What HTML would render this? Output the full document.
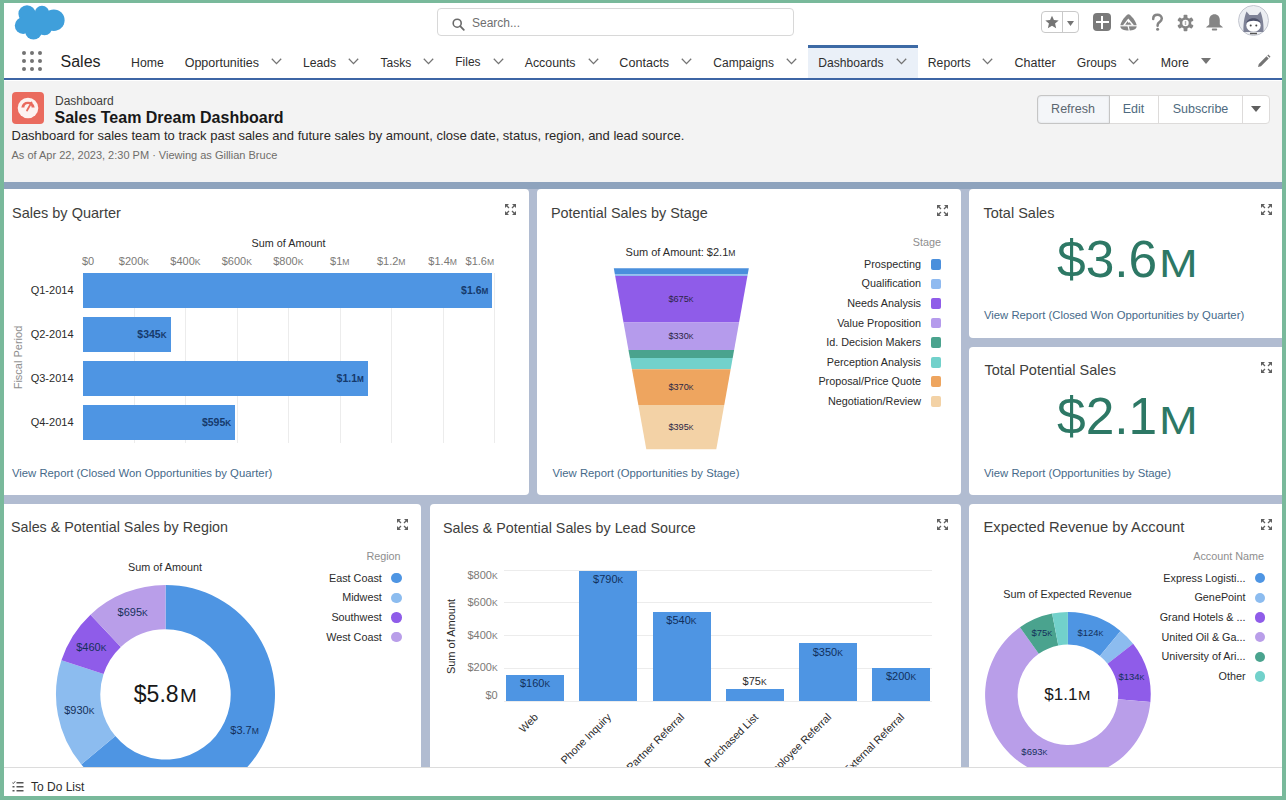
<!DOCTYPE html>
<html><head><meta charset="utf-8">
<style>
*{margin:0;padding:0;box-sizing:border-box}
html,body{width:1286px;height:800px;overflow:hidden;background:#fff}
body{font-family:"Liberation Sans",sans-serif;position:relative}
.a{position:absolute;white-space:nowrap}
.card{position:absolute;background:#fff;border-radius:4px}
.sc{font-size:78%}
.bigM{font-size:38.7px;display:inline-block;transform:scaleX(1.2);transform-origin:0 0;margin-left:2px}
.midM{font-size:0.76em;display:inline-block;transform:scaleX(1.15);transform-origin:0 0;margin-left:1px;margin-right:2px}
</style></head><body>
<div class="a" style="left:0px;top:0px;width:1286px;height:80px;background:#fff;"></div>
<svg class="a" style="left:0px;top:0px" width="70" height="45" viewBox="0 0 70 45"><g fill="#3f9fdb">
<circle cx="27" cy="13.8" r="8.6"/><circle cx="42" cy="13.2" r="7.4"/><circle cx="53.8" cy="20.2" r="10.8"/>
<circle cx="23.2" cy="25.6" r="8.4"/><circle cx="33.5" cy="31.4" r="8.2"/><circle cx="44.5" cy="27.5" r="7.8"/>
<rect x="23" y="15" width="31" height="15"/></g></svg>
<div class="a" style="left:437px;top:8px;width:357px;height:28px;background:#fff;border:1px solid #d8d8d8;border-radius:4px;box-sizing:border-box"></div>
<svg class="a" style="left:452px;top:17.5px" width="13" height="13" viewBox="0 0 13 13"><circle cx="5.2" cy="5.2" r="4" fill="none" stroke="#6a6a6a" stroke-width="1.6"/><line x1="8.2" y1="8.2" x2="11.8" y2="11.8" stroke="#6a6a6a" stroke-width="1.8" stroke-linecap="round"/></svg>
<div class="a" style="left:472.00px;top:17.34px;font-size:12px;line-height:12px;color:#6f6f6f;font-weight:normal;">Search...</div>
<div class="a" style="left:1041px;top:11px;width:38px;height:22px;background:#fff;border:1px solid #c9c9c9;border-radius:4px;box-sizing:border-box"></div>
<div class="a" style="left:1062px;top:11px;width:1px;height:22px;background:#c9c9c9;"></div>
<svg class="a" style="left:1044px;top:14px" width="16" height="16" viewBox="0 0 24 24"><path d="M12 2.5l2.9 6.6 7.1.6-5.4 4.7 1.6 7-6.2-3.7-6.2 3.7 1.6-7L2 9.7l7.1-.6z" fill="#747474"/></svg>
<svg class="a" style="left:1067px;top:21px" width="7" height="5"><path d="M0 0H7L3.5 5Z" fill="#747474"/></svg>
<div class="a" style="left:1093px;top:13px;width:18px;height:18px;background:#7a7a7a;border-radius:4px"></div>
<div class="a" style="left:1095.5px;top:21px;width:13px;height:2px;background:#fff;"></div>
<div class="a" style="left:1101px;top:15.5px;width:2px;height:13px;background:#fff;"></div>
<svg class="a" style="left:1120px;top:14px" width="17" height="17" viewBox="0 0 17 17"><path d="M8.5 0.3 C10.5 0.3 16.7 8 16.7 12 C16.7 15.3 13 16.6 8.5 16.6 C4 16.6 0.3 15.3 0.3 12 C0.3 8 6.5 0.3 8.5 0.3Z" fill="#858585"/><path d="M8.3 4.6 L14.2 11.4 L2.8 11.4Z" fill="#fff"/><path d="M5.2 10.8 L7.6 7.3 L8.6 9 L9.6 8.2 L11.6 10.8Z" fill="#858585"/><path d="M0 11.8 H17" stroke="#fff" stroke-width="1.1"/><path d="M8 11.5 L9.3 17" stroke="#fff" stroke-width="1.1"/></svg>
<svg class="a" style="left:1150px;top:13px" width="15" height="19" viewBox="0 0 15 19"><path d="M3.2 6 C3.2 3.2 5 1.8 7.5 1.8 C10 1.8 11.8 3.4 11.8 5.6 C11.8 8 9.6 8.7 8.4 10.1 C7.8 10.8 7.6 11.6 7.6 12.8" fill="none" stroke="#858585" stroke-width="2.5" stroke-linecap="round"/><circle cx="7.6" cy="16.3" r="1.5" fill="#858585"/></svg>
<svg class="a" style="left:1177px;top:14px" width="17" height="18" viewBox="0 0 17 18"><g fill="#858585" transform="translate(8.5 9)"><circle r="5.8"/><rect x="-1.9" y="-8.3" width="3.8" height="4" rx="0.8" transform="rotate(0)"/><rect x="-1.9" y="-8.3" width="3.8" height="4" rx="0.8" transform="rotate(60)"/><rect x="-1.9" y="-8.3" width="3.8" height="4" rx="0.8" transform="rotate(120)"/><rect x="-1.9" y="-8.3" width="3.8" height="4" rx="0.8" transform="rotate(180)"/><rect x="-1.9" y="-8.3" width="3.8" height="4" rx="0.8" transform="rotate(240)"/><rect x="-1.9" y="-8.3" width="3.8" height="4" rx="0.8" transform="rotate(300)"/></g><circle cx="8.5" cy="9" r="3.2" fill="#fff"/><path d="M8.5 7 V11 M7.5 8 H9.5 M7.5 10 H9.5" stroke="#999" stroke-width="0.6"/></svg>
<svg class="a" style="left:1205px;top:13px" width="19" height="19" viewBox="0 0 19 19"><path d="M1 14.5 C1.5 13.2 3.5 12.6 4.2 11.5 L4.2 7 C4.2 3.6 6.4 1.2 9.5 1.2 C12.6 1.2 14.8 3.6 14.8 7 L14.8 11.5 C15.5 12.6 17.5 13.2 18 14.5 Z" fill="#858585"/><rect x="6.8" y="15.6" width="5.4" height="1.8" rx="0.9" fill="#858585"/></svg>
<svg class="a" style="left:1238px;top:5px" width="31" height="31" viewBox="0 0 31 31">
<circle cx="15.5" cy="15.5" r="15" fill="#eceef2" stroke="#c3c6cf" stroke-width="1"/>
<path d="M5.5 27 C5 16 7.5 9 8.5 6.5 L11.5 10 L19.5 10 L22.5 6.5 C23.5 9 26 16 25.5 27 Z" fill="#7e8296"/>
<ellipse cx="15.5" cy="20.5" rx="7.2" ry="6.3" fill="#fff"/>
<path d="M8.3 18 C9.5 11.5 21.5 11.5 22.7 18 C19 15 12 15 8.3 18Z" fill="#4d5169"/>
<circle cx="12.7" cy="20.5" r="1" fill="#444"/><circle cx="18.3" cy="20.5" r="1" fill="#444"/>
<path d="M12 28.5 H19" stroke="#555" stroke-width="1.5"/>
</svg>
<svg class="a" style="left:22px;top:51px" width="20" height="20" viewBox="0 0 20 20" fill="#737373"><circle cx="2" cy="2" r="2"/><circle cx="2" cy="10" r="2"/><circle cx="2" cy="18" r="2"/><circle cx="10" cy="2" r="2"/><circle cx="10" cy="10" r="2"/><circle cx="10" cy="18" r="2"/><circle cx="18" cy="2" r="2"/><circle cx="18" cy="10" r="2"/><circle cx="18" cy="18" r="2"/></svg>
<div class="a" style="left:60.50px;top:53.96px;font-size:16px;line-height:16px;color:#232323;font-weight:normal;">Sales</div>
<div class="a" style="left:808px;top:44.5px;width:110px;height:33px;background:#eaf0f8;border-top:3px solid #3d6aa5;box-sizing:border-box"></div>
<div class="a" style="left:131.10px;top:57.01px;font-size:12.27px;line-height:12.27px;color:#2e2e2e;font-weight:normal;">Home</div>
<div class="a" style="left:184.70px;top:56.82px;font-size:12.5px;line-height:12.5px;color:#2e2e2e;font-weight:normal;">Opportunities</div>
<svg class="a" style="left:270.6px;top:58px" width="11" height="7" viewBox="0 0 11 7"><path d="M0.8 0.8 L5.5 5.6 L10.2 0.8" fill="none" stroke="#747474" stroke-width="1.3"/></svg>
<div class="a" style="left:302.90px;top:57.05px;font-size:12.23px;line-height:12.23px;color:#2e2e2e;font-weight:normal;">Leads</div>
<svg class="a" style="left:348.0px;top:58px" width="11" height="7" viewBox="0 0 11 7"><path d="M0.8 0.8 L5.5 5.6 L10.2 0.8" fill="none" stroke="#747474" stroke-width="1.3"/></svg>
<div class="a" style="left:380.50px;top:57.24px;font-size:12.0px;line-height:12.0px;color:#2e2e2e;font-weight:normal;">Tasks</div>
<svg class="a" style="left:423.4px;top:58px" width="11" height="7" viewBox="0 0 11 7"><path d="M0.8 0.8 L5.5 5.6 L10.2 0.8" fill="none" stroke="#747474" stroke-width="1.3"/></svg>
<div class="a" style="left:455.30px;top:57.28px;font-size:11.95px;line-height:11.95px;color:#2e2e2e;font-weight:normal;">Files</div>
<svg class="a" style="left:492.8px;top:58px" width="11" height="7" viewBox="0 0 11 7"><path d="M0.8 0.8 L5.5 5.6 L10.2 0.8" fill="none" stroke="#747474" stroke-width="1.3"/></svg>
<div class="a" style="left:524.70px;top:56.94px;font-size:12.36px;line-height:12.36px;color:#2e2e2e;font-weight:normal;">Accounts</div>
<svg class="a" style="left:588.0px;top:58px" width="11" height="7" viewBox="0 0 11 7"><path d="M0.8 0.8 L5.5 5.6 L10.2 0.8" fill="none" stroke="#747474" stroke-width="1.3"/></svg>
<div class="a" style="left:619.30px;top:56.73px;font-size:12.6px;line-height:12.6px;color:#2e2e2e;font-weight:normal;">Contacts</div>
<svg class="a" style="left:680.8px;top:58px" width="11" height="7" viewBox="0 0 11 7"><path d="M0.8 0.8 L5.5 5.6 L10.2 0.8" fill="none" stroke="#747474" stroke-width="1.3"/></svg>
<div class="a" style="left:713.30px;top:57.24px;font-size:12.0px;line-height:12.0px;color:#2e2e2e;font-weight:normal;">Campaigns</div>
<svg class="a" style="left:785.6px;top:58px" width="11" height="7" viewBox="0 0 11 7"><path d="M0.8 0.8 L5.5 5.6 L10.2 0.8" fill="none" stroke="#747474" stroke-width="1.3"/></svg>
<div class="a" style="left:818.30px;top:57.16px;font-size:12.1px;line-height:12.1px;color:#2e2e2e;font-weight:normal;">Dashboards</div>
<svg class="a" style="left:895.8px;top:58px" width="11" height="7" viewBox="0 0 11 7"><path d="M0.8 0.8 L5.5 5.6 L10.2 0.8" fill="none" stroke="#747474" stroke-width="1.3"/></svg>
<div class="a" style="left:927.80px;top:57.07px;font-size:12.2px;line-height:12.2px;color:#2e2e2e;font-weight:normal;">Reports</div>
<svg class="a" style="left:981.6px;top:58px" width="11" height="7" viewBox="0 0 11 7"><path d="M0.8 0.8 L5.5 5.6 L10.2 0.8" fill="none" stroke="#747474" stroke-width="1.3"/></svg>
<div class="a" style="left:1014.60px;top:56.82px;font-size:12.5px;line-height:12.5px;color:#2e2e2e;font-weight:normal;">Chatter</div>
<div class="a" style="left:1076.80px;top:57.16px;font-size:12.1px;line-height:12.1px;color:#2e2e2e;font-weight:normal;">Groups</div>
<svg class="a" style="left:1128.0px;top:58px" width="11" height="7" viewBox="0 0 11 7"><path d="M0.8 0.8 L5.5 5.6 L10.2 0.8" fill="none" stroke="#747474" stroke-width="1.3"/></svg>
<div class="a" style="left:1160.80px;top:56.95px;font-size:12.34px;line-height:12.34px;color:#2e2e2e;font-weight:normal;">More</div>
<svg class="a" style="left:1201px;top:58px" width="10" height="6"><path d="M0 0H10L5 6Z" fill="#747474"/></svg>
<svg class="a" style="left:1257px;top:54px" width="14" height="14" viewBox="0 0 14 14"><path d="M1 13 L1.8 10 L9.5 2.3 L11.7 4.5 L4 12.2 Z M10.3 1.5 L11.3 0.5 L13.5 2.7 L12.5 3.7Z" fill="#747474"/></svg>
<div class="a" style="left:0px;top:77.6px;width:1286px;height:2.6px;background:#3d65a5;"></div>
<div class="a" style="left:0px;top:80.5px;width:1286px;height:101px;background:#f3f3f3;"></div>
<div class="a" style="left:12px;top:92px;width:32px;height:32px;background:#ea6b5e;border-radius:4px"></div>
<svg class="a" style="left:12px;top:92px" width="32" height="32" viewBox="0 0 32 32"><circle cx="16" cy="16" r="10.3" fill="#fdf3f1"/><path d="M9.3 15.5 A6.8 6.8 0 0 1 22.7 15.5 L19.6 15.5 A3.6 3.6 0 0 0 12.4 15.5Z" fill="#ea6b5e"/><path d="M15 18.5 L19.5 10.5" stroke="#ea6b5e" stroke-width="1.8" stroke-linecap="round"/></svg>
<div class="a" style="left:55.00px;top:94.64px;font-size:12px;line-height:12px;color:#3e3e3c;font-weight:normal;">Dashboard</div>
<div class="a" style="left:54.50px;top:109.66px;font-size:16px;line-height:16px;color:#181818;font-weight:bold;">Sales Team Dream Dashboard</div>
<div class="a" style="left:11.50px;top:128.70px;font-size:13px;line-height:13px;color:#2b2826;font-weight:normal;">Dashboard for sales team to track past sales and future sales by amount, close date, status, region, and lead source.</div>
<div class="a" style="left:11.50px;top:150.09px;font-size:11px;line-height:11px;color:#6f6d6a;font-weight:normal;">As of Apr 22, 2023, 2:30 PM · Viewing as Gillian Bruce</div>
<div class="a" style="left:1037px;top:95px;width:233px;height:29px;background:#fff;border:1px solid #dddbda;border-radius:4px;box-sizing:border-box"></div>
<div class="a" style="left:1037px;top:95px;width:73px;height:29px;background:#f4f6f9;border:1px solid #c5c5c5;border-radius:4px 0 0 4px;box-sizing:border-box;box-shadow:inset 0 0 2px rgba(0,0,0,.12)"></div>
<div class="a" style="left:1158px;top:95px;width:1px;height:29px;background:#dddbda;"></div>
<div class="a" style="left:1242px;top:95px;width:1px;height:29px;background:#dddbda;"></div>
<div class="a" style="left:573.00px;width:1000px;text-align:center;top:103.42px;font-size:12.5px;line-height:12.5px;color:#5b6670;font-weight:normal;">Refresh</div>
<div class="a" style="left:633.50px;width:1000px;text-align:center;top:103.42px;font-size:12.5px;line-height:12.5px;color:#4e6a80;font-weight:normal;">Edit</div>
<div class="a" style="left:700.50px;width:1000px;text-align:center;top:103.42px;font-size:12.5px;line-height:12.5px;color:#4e6a80;font-weight:normal;">Subscribe</div>
<svg class="a" style="left:1251px;top:106px" width="10" height="6"><path d="M0 0H10L5 6Z" fill="#5f5f5f"/></svg>
<div class="a" style="left:0px;top:181.5px;width:1286px;height:620px;background:#b1bcd1;"></div>
<div class="a" style="left:0px;top:181.5px;width:1286px;height:7.5px;background:#8ea3bd;"></div>
<div class="card" style="left:0px;top:189px;width:529px;height:306px"></div>
<div class="card" style="left:537px;top:189px;width:424px;height:306px"></div>
<div class="card" style="left:969px;top:189px;width:317px;height:149px"></div>
<div class="card" style="left:969px;top:347px;width:317px;height:148px"></div>
<div class="card" style="left:0px;top:504px;width:421px;height:300px"></div>
<div class="card" style="left:430px;top:504px;width:531px;height:300px"></div>
<div class="card" style="left:969px;top:504px;width:317px;height:300px"></div>
<div class="a" style="left:12.00px;top:206.03px;font-size:14.5px;line-height:14.5px;color:#3e3e3c;font-weight:normal;">Sales by Quarter</div>
<svg class="a" style="left:505px;top:204px" width="11" height="11" viewBox="0 0 11 11"><g fill="#5f5f5f"><path d="M0 0H4L0 4Z"/><path d="M11 0V4L7 0Z"/><path d="M0 11V7L4 11Z"/><path d="M11 11H7L11 7Z"/></g><g stroke="#5f5f5f" stroke-width="1.3"><path d="M1 1L4 4M10 1L7 4M1 10L4 7M10 10L7 7"/></g></svg>
<div class="a" style="left:-211.50px;width:1000px;text-align:center;top:238.06px;font-size:10.8px;line-height:10.8px;color:#2b2b2b;font-weight:normal;">Sum of Amount</div>
<div class="a" style="left:134px;top:273px;width:1px;height:170px;background:#ececec;"></div>
<div class="a" style="left:185px;top:273px;width:1px;height:170px;background:#ececec;"></div>
<div class="a" style="left:237px;top:273px;width:1px;height:170px;background:#ececec;"></div>
<div class="a" style="left:288px;top:273px;width:1px;height:170px;background:#ececec;"></div>
<div class="a" style="left:340px;top:273px;width:1px;height:170px;background:#ececec;"></div>
<div class="a" style="left:391px;top:273px;width:1px;height:170px;background:#ececec;"></div>
<div class="a" style="left:443px;top:273px;width:1px;height:170px;background:#ececec;"></div>
<div class="a" style="left:494px;top:273px;width:1px;height:170px;background:#ececec;"></div>
<div class="a" style="left:82.00px;top:256.49px;font-size:11px;line-height:11px;color:#7b7976;font-weight:normal;">$0</div>
<div class="a" style="left:-366.05px;width:1000px;text-align:center;top:256.49px;font-size:11px;line-height:11px;color:#7b7976;font-weight:normal;">$200<span class="sc">K</span></div>
<div class="a" style="left:-314.60px;width:1000px;text-align:center;top:256.49px;font-size:11px;line-height:11px;color:#7b7976;font-weight:normal;">$400<span class="sc">K</span></div>
<div class="a" style="left:-263.15px;width:1000px;text-align:center;top:256.49px;font-size:11px;line-height:11px;color:#7b7976;font-weight:normal;">$600<span class="sc">K</span></div>
<div class="a" style="left:-211.70px;width:1000px;text-align:center;top:256.49px;font-size:11px;line-height:11px;color:#7b7976;font-weight:normal;">$800<span class="sc">K</span></div>
<div class="a" style="left:-160.25px;width:1000px;text-align:center;top:256.49px;font-size:11px;line-height:11px;color:#7b7976;font-weight:normal;">$1<span class="sc">M</span></div>
<div class="a" style="left:-108.80px;width:1000px;text-align:center;top:256.49px;font-size:11px;line-height:11px;color:#7b7976;font-weight:normal;">$1.2<span class="sc">M</span></div>
<div class="a" style="left:-57.35px;width:1000px;text-align:center;top:256.49px;font-size:11px;line-height:11px;color:#7b7976;font-weight:normal;">$1.4<span class="sc">M</span></div>
<div class="a" style="left:-505.90px;width:1000px;text-align:right;top:256.49px;font-size:11px;line-height:11px;color:#7b7976;font-weight:normal;">$1.6<span class="sc">M</span></div>
<div class="a" style="left:82.5px;top:273px;width:409.8px;height:35px;background:#4e95e3;"></div>
<div class="a" style="left:-511.70px;width:1000px;text-align:right;top:285.31px;font-size:10.5px;line-height:10.5px;color:#163a6c;font-weight:bold;">$1.6<span class="sc">M</span></div>
<div class="a" style="left:-926.50px;width:1000px;text-align:right;top:285.19px;font-size:11px;line-height:11px;color:#2b2b2b;font-weight:normal;">Q1-2014</div>
<div class="a" style="left:82.5px;top:317px;width:88.1px;height:35px;background:#4e95e3;"></div>
<div class="a" style="left:-833.40px;width:1000px;text-align:right;top:329.31px;font-size:10.5px;line-height:10.5px;color:#163a6c;font-weight:bold;">$345<span class="sc">K</span></div>
<div class="a" style="left:-926.50px;width:1000px;text-align:right;top:329.19px;font-size:11px;line-height:11px;color:#2b2b2b;font-weight:normal;">Q2-2014</div>
<div class="a" style="left:82.5px;top:361px;width:285.3px;height:35px;background:#4e95e3;"></div>
<div class="a" style="left:-636.20px;width:1000px;text-align:right;top:373.31px;font-size:10.5px;line-height:10.5px;color:#163a6c;font-weight:bold;">$1.1<span class="sc">M</span></div>
<div class="a" style="left:-926.50px;width:1000px;text-align:right;top:373.19px;font-size:11px;line-height:11px;color:#2b2b2b;font-weight:normal;">Q3-2014</div>
<div class="a" style="left:82.5px;top:405px;width:152.7px;height:35px;background:#4e95e3;"></div>
<div class="a" style="left:-768.80px;width:1000px;text-align:right;top:417.31px;font-size:10.5px;line-height:10.5px;color:#163a6c;font-weight:bold;">$595<span class="sc">K</span></div>
<div class="a" style="left:-926.50px;width:1000px;text-align:right;top:417.19px;font-size:11px;line-height:11px;color:#2b2b2b;font-weight:normal;">Q4-2014</div>
<div class="a" style="left:-481.70px;width:1000px;text-align:center;top:352.19px;font-size:11px;line-height:11px;color:#8e8e8e;font-weight:normal;transform:rotate(-90deg);transform-origin:500px 50%;">Fiscal Period</div>
<div class="a" style="left:12.00px;top:467.83px;font-size:11.3px;line-height:11.3px;color:#466a8a;font-weight:normal;">View Report (Closed Won Opportunities by Quarter)</div>
<div class="a" style="left:551.00px;top:205.81px;font-size:14.4px;line-height:14.4px;color:#3e3e3c;font-weight:normal;">Potential Sales by Stage</div>
<svg class="a" style="left:937px;top:204.5px" width="11" height="11" viewBox="0 0 11 11"><g fill="#5f5f5f"><path d="M0 0H4L0 4Z"/><path d="M11 0V4L7 0Z"/><path d="M0 11V7L4 11Z"/><path d="M11 11H7L11 7Z"/></g><g stroke="#5f5f5f" stroke-width="1.3"><path d="M1 1L4 4M10 1L7 4M1 10L4 7M10 10L7 7"/></g></svg>
<div class="a" style="left:180.50px;width:1000px;text-align:center;top:246.79px;font-size:11px;line-height:11px;color:#2b2b2b;font-weight:normal;">Sum of Amount: $2.1<span class="sc">M</span></div>
<svg class="a" style="left:537px;top:189px" width="424" height="306"><path d="M76.80 79.30 L211.80 79.30 L210.69 85.50 L77.91 85.50Z" fill="#4a8fdc"/><path d="M77.91 85.50 L210.69 85.50 L210.42 87.00 L78.18 87.00Z" fill="#8fbaf0"/><path d="M78.18 87.00 L210.42 87.00 L202.07 133.50 L86.53 133.50Z" fill="#8f5ce9"/><path d="M86.53 133.50 L202.07 133.50 L197.13 161.00 L91.47 161.00Z" fill="#b59bec"/><path d="M91.47 161.00 L197.13 161.00 L195.69 169.00 L92.91 169.00Z" fill="#4aa38e"/><path d="M92.91 169.00 L195.69 169.00 L193.66 180.30 L94.94 180.30Z" fill="#72d1cb"/><path d="M94.94 180.30 L193.66 180.30 L187.25 216.00 L101.35 216.00Z" fill="#eea55f"/><path d="M101.35 216.00 L187.25 216.00 L179.30 260.30 L109.30 260.30Z" fill="#f3d2a6"/></svg>
<div class="a" style="left:181.00px;width:1000px;text-align:center;top:295.11px;font-size:9.2px;line-height:9.2px;color:#2c2545;font-weight:normal;">$675<span class="sc">K</span></div>
<div class="a" style="left:181.00px;width:1000px;text-align:center;top:331.61px;font-size:9.2px;line-height:9.2px;color:#2c2545;font-weight:normal;">$330<span class="sc">K</span></div>
<div class="a" style="left:181.00px;width:1000px;text-align:center;top:382.61px;font-size:9.2px;line-height:9.2px;color:#2c2545;font-weight:normal;">$370<span class="sc">K</span></div>
<div class="a" style="left:181.00px;width:1000px;text-align:center;top:422.61px;font-size:9.2px;line-height:9.2px;color:#2c2545;font-weight:normal;">$395<span class="sc">K</span></div>
<div class="a" style="left:-59.00px;width:1000px;text-align:right;top:236.86px;font-size:10.8px;line-height:10.8px;color:#8e8e8e;font-weight:normal;">Stage</div>
<div class="a" style="left:-79.00px;width:1000px;text-align:right;top:258.86px;font-size:10.8px;line-height:10.8px;color:#2b2b2b;font-weight:normal;">Prospecting</div>
<div class="a" style="left:930.8px;top:259.0px;width:10.7px;height:10.7px;background:#4a8fdc;border-radius:2px"></div>
<div class="a" style="left:-79.00px;width:1000px;text-align:right;top:278.43px;font-size:10.8px;line-height:10.8px;color:#2b2b2b;font-weight:normal;">Qualification</div>
<div class="a" style="left:930.8px;top:278.57px;width:10.7px;height:10.7px;background:#8fbaf0;border-radius:2px"></div>
<div class="a" style="left:-79.00px;width:1000px;text-align:right;top:298.00px;font-size:10.8px;line-height:10.8px;color:#2b2b2b;font-weight:normal;">Needs Analysis</div>
<div class="a" style="left:930.8px;top:298.14px;width:10.7px;height:10.7px;background:#8f5ce9;border-radius:2px"></div>
<div class="a" style="left:-79.00px;width:1000px;text-align:right;top:317.57px;font-size:10.8px;line-height:10.8px;color:#2b2b2b;font-weight:normal;">Value Proposition</div>
<div class="a" style="left:930.8px;top:317.71px;width:10.7px;height:10.7px;background:#b59bec;border-radius:2px"></div>
<div class="a" style="left:-79.00px;width:1000px;text-align:right;top:337.14px;font-size:10.8px;line-height:10.8px;color:#2b2b2b;font-weight:normal;">Id. Decision Makers</div>
<div class="a" style="left:930.8px;top:337.28000000000003px;width:10.7px;height:10.7px;background:#4aa38e;border-radius:2px"></div>
<div class="a" style="left:-79.00px;width:1000px;text-align:right;top:356.71px;font-size:10.8px;line-height:10.8px;color:#2b2b2b;font-weight:normal;">Perception Analysis</div>
<div class="a" style="left:930.8px;top:356.84999999999997px;width:10.7px;height:10.7px;background:#72d1cb;border-radius:2px"></div>
<div class="a" style="left:-79.00px;width:1000px;text-align:right;top:376.28px;font-size:10.8px;line-height:10.8px;color:#2b2b2b;font-weight:normal;">Proposal/Price Quote</div>
<div class="a" style="left:930.8px;top:376.42px;width:10.7px;height:10.7px;background:#eea55f;border-radius:2px"></div>
<div class="a" style="left:-79.00px;width:1000px;text-align:right;top:395.85px;font-size:10.8px;line-height:10.8px;color:#2b2b2b;font-weight:normal;">Negotiation/Review</div>
<div class="a" style="left:930.8px;top:395.99px;width:10.7px;height:10.7px;background:#f3d2a6;border-radius:2px"></div>
<div class="a" style="left:552.50px;top:467.73px;font-size:11.3px;line-height:11.3px;color:#466a8a;font-weight:normal;">View Report (Opportunities by Stage)</div>
<div class="a" style="left:983.50px;top:205.63px;font-size:14.5px;line-height:14.5px;color:#3e3e3c;font-weight:normal;">Total Sales</div>
<svg class="a" style="left:1261px;top:204px" width="11" height="11" viewBox="0 0 11 11"><g fill="#5f5f5f"><path d="M0 0H4L0 4Z"/><path d="M11 0V4L7 0Z"/><path d="M0 11V7L4 11Z"/><path d="M11 11H7L11 7Z"/></g><g stroke="#5f5f5f" stroke-width="1.3"><path d="M1 1L4 4M10 1L7 4M1 10L4 7M10 10L7 7"/></g></svg>
<div class="a" style="left:1057.00px;top:233.61px;font-size:51.5px;line-height:51.5px;color:#2d7865;font-weight:normal;">$3.6<span class="bigM">M</span></div>
<div class="a" style="left:984.00px;top:310.03px;font-size:11.3px;line-height:11.3px;color:#466a8a;font-weight:normal;">View Report (Closed Won Opportunities by Quarter)</div>
<div class="a" style="left:984.50px;top:362.73px;font-size:14.5px;line-height:14.5px;color:#3e3e3c;font-weight:normal;">Total Potential Sales</div>
<svg class="a" style="left:1261px;top:362px" width="11" height="11" viewBox="0 0 11 11"><g fill="#5f5f5f"><path d="M0 0H4L0 4Z"/><path d="M11 0V4L7 0Z"/><path d="M0 11V7L4 11Z"/><path d="M11 11H7L11 7Z"/></g><g stroke="#5f5f5f" stroke-width="1.3"><path d="M1 1L4 4M10 1L7 4M1 10L4 7M10 10L7 7"/></g></svg>
<div class="a" style="left:1057.00px;top:391.01px;font-size:51.5px;line-height:51.5px;color:#2d7865;font-weight:normal;">$2.1<span class="bigM">M</span></div>
<div class="a" style="left:984.00px;top:467.73px;font-size:11.3px;line-height:11.3px;color:#466a8a;font-weight:normal;">View Report (Opportunities by Stage)</div>
<div class="a" style="left:11.00px;top:520.30px;font-size:14.3px;line-height:14.3px;color:#3e3e3c;font-weight:normal;">Sales &amp; Potential Sales by Region</div>
<svg class="a" style="left:397px;top:518.5px" width="11" height="11" viewBox="0 0 11 11"><g fill="#5f5f5f"><path d="M0 0H4L0 4Z"/><path d="M11 0V4L7 0Z"/><path d="M0 11V7L4 11Z"/><path d="M11 11H7L11 7Z"/></g><g stroke="#5f5f5f" stroke-width="1.3"><path d="M1 1L4 4M10 1L7 4M1 10L4 7M10 10L7 7"/></g></svg>
<div class="a" style="left:-335.00px;width:1000px;text-align:center;top:562.16px;font-size:10.8px;line-height:10.8px;color:#2b2b2b;font-weight:normal;">Sum of Amount</div>
<svg class="a" style="left:40px;top:570px" width="260" height="250"><path d="M125.50 14.90 A109.5 109.5 0 1 1 41.31 194.42 L75.37 166.09 A65.2 65.2 0 1 0 125.50 59.20Z" fill="#4e95e3"/><path d="M41.31 194.42 A109.5 109.5 0 0 1 21.43 90.34 L63.54 104.12 A65.2 65.2 0 0 0 75.37 166.09Z" fill="#8cbcef"/><path d="M21.43 90.34 A109.5 109.5 0 0 1 50.47 44.64 L80.83 76.91 A65.2 65.2 0 0 0 63.54 104.12Z" fill="#8f5ce9"/><path d="M50.47 44.64 A109.5 109.5 0 0 1 125.50 14.90 L125.50 59.20 A65.2 65.2 0 0 0 80.83 76.91Z" fill="#b99ee9"/></svg>
<div class="a" style="left:-367.30px;width:1000px;text-align:center;top:606.69px;font-size:11px;line-height:11px;color:#14305a;font-weight:normal;">$695<span class="sc">K</span></div>
<div class="a" style="left:-408.70px;width:1000px;text-align:center;top:641.69px;font-size:11px;line-height:11px;color:#14305a;font-weight:normal;">$460<span class="sc">K</span></div>
<div class="a" style="left:-420.70px;width:1000px;text-align:center;top:705.19px;font-size:11px;line-height:11px;color:#14305a;font-weight:normal;">$930<span class="sc">K</span></div>
<div class="a" style="left:-255.40px;width:1000px;text-align:center;top:725.49px;font-size:11px;line-height:11px;color:#14305a;font-weight:normal;">$3.7<span class="sc">M</span></div>
<div class="a" style="left:-335.00px;width:1000px;text-align:center;top:683.23px;font-size:23px;line-height:23px;color:#181818;font-weight:normal;">$5.8<span class="midM">M</span></div>
<div class="a" style="left:-599.40px;width:1000px;text-align:right;top:551.16px;font-size:10.8px;line-height:10.8px;color:#8e8e8e;font-weight:normal;">Region</div>
<div class="a" style="left:-618.20px;width:1000px;text-align:right;top:572.66px;font-size:10.8px;line-height:10.8px;color:#2b2b2b;font-weight:normal;">East Coast</div>
<div class="a" style="left:391.4px;top:573.0px;width:10.4px;height:10.4px;border-radius:50%;background:#4e95e3"></div>
<div class="a" style="left:-618.20px;width:1000px;text-align:right;top:592.31px;font-size:10.8px;line-height:10.8px;color:#2b2b2b;font-weight:normal;">Midwest</div>
<div class="a" style="left:391.4px;top:592.6px;width:10.4px;height:10.4px;border-radius:50%;background:#8cbcef"></div>
<div class="a" style="left:-618.20px;width:1000px;text-align:right;top:611.96px;font-size:10.8px;line-height:10.8px;color:#2b2b2b;font-weight:normal;">Southwest</div>
<div class="a" style="left:391.4px;top:612.3px;width:10.4px;height:10.4px;border-radius:50%;background:#8f5ce9"></div>
<div class="a" style="left:-618.20px;width:1000px;text-align:right;top:631.61px;font-size:10.8px;line-height:10.8px;color:#2b2b2b;font-weight:normal;">West Coast</div>
<div class="a" style="left:391.4px;top:632.0px;width:10.4px;height:10.4px;border-radius:50%;background:#b99ee9"></div>
<div class="a" style="left:443.00px;top:520.70px;font-size:14.3px;line-height:14.3px;color:#3e3e3c;font-weight:normal;">Sales &amp; Potential Sales by Lead Source</div>
<svg class="a" style="left:937px;top:518.5px" width="11" height="11" viewBox="0 0 11 11"><g fill="#5f5f5f"><path d="M0 0H4L0 4Z"/><path d="M11 0V4L7 0Z"/><path d="M0 11V7L4 11Z"/><path d="M11 11H7L11 7Z"/></g><g stroke="#5f5f5f" stroke-width="1.3"><path d="M1 1L4 4M10 1L7 4M1 10L4 7M10 10L7 7"/></g></svg>
<div class="a" style="left:504px;top:701px;width:428px;height:1px;background:#ececec;"></div>
<div class="a" style="left:-502.30px;width:1000px;text-align:right;top:690.29px;font-size:11px;line-height:11px;color:#7b7976;font-weight:normal;">$0</div>
<div class="a" style="left:504px;top:668px;width:428px;height:1px;background:#ececec;"></div>
<div class="a" style="left:-502.30px;width:1000px;text-align:right;top:662.49px;font-size:11px;line-height:11px;color:#7b7976;font-weight:normal;">$200<span class="sc">K</span></div>
<div class="a" style="left:504px;top:635px;width:428px;height:1px;background:#ececec;"></div>
<div class="a" style="left:-502.30px;width:1000px;text-align:right;top:629.69px;font-size:11px;line-height:11px;color:#7b7976;font-weight:normal;">$400<span class="sc">K</span></div>
<div class="a" style="left:504px;top:602px;width:428px;height:1px;background:#ececec;"></div>
<div class="a" style="left:-502.30px;width:1000px;text-align:right;top:596.89px;font-size:11px;line-height:11px;color:#7b7976;font-weight:normal;">$600<span class="sc">K</span></div>
<div class="a" style="left:504px;top:570px;width:428px;height:1px;background:#ececec;"></div>
<div class="a" style="left:-502.30px;width:1000px;text-align:right;top:569.59px;font-size:11px;line-height:11px;color:#7b7976;font-weight:normal;">$800<span class="sc">K</span></div>
<div class="a" style="left:-49.00px;width:1000px;text-align:center;top:630.89px;font-size:11px;line-height:11px;color:#2b2b2b;font-weight:normal;transform:rotate(-90deg);transform-origin:500px 50%;">Sum of Amount</div>
<div class="a" style="left:506.0px;top:674.56px;width:58px;height:26.24000000000001px;background:#4e95e3;"></div>
<div class="a" style="left:35.00px;width:1000px;text-align:center;top:677.75px;font-size:11px;line-height:11px;color:#12305c;font-weight:normal;">$160<span class="sc">K</span></div>
<div class="a" style="left:-464.0px;top:709.0px;width:1000px;height:12px;line-height:12px;font-size:10.7px;text-align:right;color:#2b2b2b;transform:rotate(-45deg);transform-origin:100% 50%">Web</div>
<div class="a" style="left:579.0px;top:571.24px;width:58px;height:129.55999999999995px;background:#4e95e3;"></div>
<div class="a" style="left:108.20px;width:1000px;text-align:center;top:574.43px;font-size:11px;line-height:11px;color:#12305c;font-weight:normal;">$790<span class="sc">K</span></div>
<div class="a" style="left:-390.8px;top:709.0px;width:1000px;height:12px;line-height:12px;font-size:10.7px;text-align:right;color:#2b2b2b;transform:rotate(-45deg);transform-origin:100% 50%">Phone Inquiry</div>
<div class="a" style="left:652.5px;top:612.24px;width:58px;height:88.55999999999995px;background:#4e95e3;"></div>
<div class="a" style="left:181.40px;width:1000px;text-align:center;top:615.43px;font-size:11px;line-height:11px;color:#12305c;font-weight:normal;">$540<span class="sc">K</span></div>
<div class="a" style="left:-317.6px;top:709.0px;width:1000px;height:12px;line-height:12px;font-size:10.7px;text-align:right;color:#2b2b2b;transform:rotate(-45deg);transform-origin:100% 50%">Partner Referral</div>
<div class="a" style="left:725.5px;top:688.5px;width:58px;height:12.299999999999955px;background:#4e95e3;"></div>
<div class="a" style="left:254.60px;width:1000px;text-align:center;top:675.89px;font-size:11px;line-height:11px;color:#2b2b2b;font-weight:normal;">$75<span class="sc">K</span></div>
<div class="a" style="left:-244.4px;top:709.0px;width:1000px;height:12px;line-height:12px;font-size:10.7px;text-align:right;color:#2b2b2b;transform:rotate(-45deg);transform-origin:100% 50%">Purchased List</div>
<div class="a" style="left:799.0px;top:643.4px;width:58px;height:57.39999999999998px;background:#4e95e3;"></div>
<div class="a" style="left:327.80px;width:1000px;text-align:center;top:646.59px;font-size:11px;line-height:11px;color:#12305c;font-weight:normal;">$350<span class="sc">K</span></div>
<div class="a" style="left:-171.2px;top:709.0px;width:1000px;height:12px;line-height:12px;font-size:10.7px;text-align:right;color:#2b2b2b;transform:rotate(-45deg);transform-origin:100% 50%">Employee Referral</div>
<div class="a" style="left:872.0px;top:668.0px;width:58px;height:32.799999999999955px;background:#4e95e3;"></div>
<div class="a" style="left:401.00px;width:1000px;text-align:center;top:671.19px;font-size:11px;line-height:11px;color:#12305c;font-weight:normal;">$200<span class="sc">K</span></div>
<div class="a" style="left:-98.0px;top:709.0px;width:1000px;height:12px;line-height:12px;font-size:10.7px;text-align:right;color:#2b2b2b;transform:rotate(-45deg);transform-origin:100% 50%">External Referral</div>
<div class="a" style="left:983.50px;top:519.91px;font-size:14.75px;line-height:14.75px;color:#3e3e3c;font-weight:normal;">Expected Revenue by Account</div>
<svg class="a" style="left:1261px;top:518.5px" width="11" height="11" viewBox="0 0 11 11"><g fill="#5f5f5f"><path d="M0 0H4L0 4Z"/><path d="M11 0V4L7 0Z"/><path d="M0 11V7L4 11Z"/><path d="M11 11H7L11 7Z"/></g><g stroke="#5f5f5f" stroke-width="1.3"><path d="M1 1L4 4M10 1L7 4M1 10L4 7M10 10L7 7"/></g></svg>
<div class="a" style="left:567.50px;width:1000px;text-align:center;top:588.86px;font-size:10.8px;line-height:10.8px;color:#2b2b2b;font-weight:normal;">Sum of Expected Revenue</div>
<svg class="a" style="left:980px;top:605px" width="180" height="200"><path d="M87.90 7.00 A82.8 82.8 0 0 1 140.57 25.91 L119.89 50.99 A50.3 50.3 0 0 0 87.90 39.50Z" fill="#4e95e3"/><path d="M140.57 25.91 A82.8 82.8 0 0 1 153.15 38.82 L127.54 58.83 A50.3 50.3 0 0 0 119.89 50.99Z" fill="#8cbcef"/><path d="M153.15 38.82 A82.8 82.8 0 0 1 170.38 97.02 L138.01 94.18 A50.3 50.3 0 0 0 127.54 58.83Z" fill="#8f5ce9"/><path d="M170.38 97.02 A82.8 82.8 0 1 1 39.94 22.31 L58.76 48.80 A50.3 50.3 0 1 0 138.01 94.18Z" fill="#b99ee9"/><path d="M39.94 22.31 A82.8 82.8 0 0 1 72.10 8.52 L78.30 40.42 A50.3 50.3 0 0 0 58.76 48.80Z" fill="#4aa38e"/><path d="M72.10 8.52 A82.8 82.8 0 0 1 87.90 7.00 L87.90 39.50 A50.3 50.3 0 0 0 78.30 40.42Z" fill="#72d1cb"/></svg>
<div class="a" style="left:541.90px;width:1000px;text-align:center;top:628.46px;font-size:9.5px;line-height:9.5px;color:#14305a;font-weight:normal;">$75<span class="sc">K</span></div>
<div class="a" style="left:590.50px;width:1000px;text-align:center;top:628.46px;font-size:9.5px;line-height:9.5px;color:#14305a;font-weight:normal;">$124<span class="sc">K</span></div>
<div class="a" style="left:631.50px;width:1000px;text-align:center;top:671.86px;font-size:9.5px;line-height:9.5px;color:#14305a;font-weight:normal;">$134<span class="sc">K</span></div>
<div class="a" style="left:534.40px;width:1000px;text-align:center;top:746.96px;font-size:9.5px;line-height:9.5px;color:#14305a;font-weight:normal;">$693<span class="sc">K</span></div>
<div class="a" style="left:567.70px;width:1000px;text-align:center;top:685.81px;font-size:17px;line-height:17px;color:#181818;font-weight:normal;">$1.1<span class="midM">M</span></div>
<div class="a" style="left:264.00px;width:1000px;text-align:right;top:551.16px;font-size:10.8px;line-height:10.8px;color:#8e8e8e;font-weight:normal;">Account Name</div>
<div class="a" style="left:245.50px;width:1000px;text-align:right;top:572.66px;font-size:10.8px;line-height:10.8px;color:#2b2b2b;font-weight:normal;">Express Logisti...</div>
<div class="a" style="left:1255.1px;top:573.0px;width:10.4px;height:10.4px;border-radius:50%;background:#4e95e3"></div>
<div class="a" style="left:245.50px;width:1000px;text-align:right;top:592.31px;font-size:10.8px;line-height:10.8px;color:#2b2b2b;font-weight:normal;">GenePoint</div>
<div class="a" style="left:1255.1px;top:592.6px;width:10.4px;height:10.4px;border-radius:50%;background:#8cbcef"></div>
<div class="a" style="left:245.50px;width:1000px;text-align:right;top:611.96px;font-size:10.8px;line-height:10.8px;color:#2b2b2b;font-weight:normal;">Grand Hotels &amp; ...</div>
<div class="a" style="left:1255.1px;top:612.3px;width:10.4px;height:10.4px;border-radius:50%;background:#8f5ce9"></div>
<div class="a" style="left:245.50px;width:1000px;text-align:right;top:631.61px;font-size:10.8px;line-height:10.8px;color:#2b2b2b;font-weight:normal;">United Oil &amp; Ga...</div>
<div class="a" style="left:1255.1px;top:632.0px;width:10.4px;height:10.4px;border-radius:50%;background:#b99ee9"></div>
<div class="a" style="left:245.50px;width:1000px;text-align:right;top:651.26px;font-size:10.8px;line-height:10.8px;color:#2b2b2b;font-weight:normal;">University of Ari...</div>
<div class="a" style="left:1255.1px;top:651.6px;width:10.4px;height:10.4px;border-radius:50%;background:#4aa38e"></div>
<div class="a" style="left:245.50px;width:1000px;text-align:right;top:670.91px;font-size:10.8px;line-height:10.8px;color:#2b2b2b;font-weight:normal;">Other</div>
<div class="a" style="left:1255.1px;top:671.2px;width:10.4px;height:10.4px;border-radius:50%;background:#72d1cb"></div>
<div class="a" style="left:0px;top:767px;width:1286px;height:33px;background:#fff;border-top:1px solid #dcdcdc;box-sizing:border-box"></div>
<svg class="a" style="left:12px;top:781px" width="12" height="11" viewBox="0 0 12 11"><g fill="#555"><rect x="4.5" y="1" width="7" height="1.5"/><rect x="4.5" y="5" width="7" height="1.5"/><rect x="4.5" y="9" width="7" height="1.5"/><rect x="0.5" y="5" width="2" height="1.5"/><rect x="0.5" y="9" width="2" height="1.5"/></g><path d="M0.3 1.5 L1.3 2.6 L3.2 0.3" fill="none" stroke="#555" stroke-width="1"/></svg>
<div class="a" style="left:31.00px;top:780.84px;font-size:12px;line-height:12px;color:#2b2b2b;font-weight:normal;">To Do List</div>
<div class="a" style="left:0px;top:0px;width:1286px;height:3px;background:#79b99b;"></div>
<div class="a" style="left:0px;top:0px;width:4px;height:800px;background:#79b99b;"></div>
<div class="a" style="left:1282px;top:0px;width:4px;height:800px;background:#79b99b;"></div>
<div class="a" style="left:0px;top:796px;width:1286px;height:4px;background:#79b99b;"></div>
</body></html>
